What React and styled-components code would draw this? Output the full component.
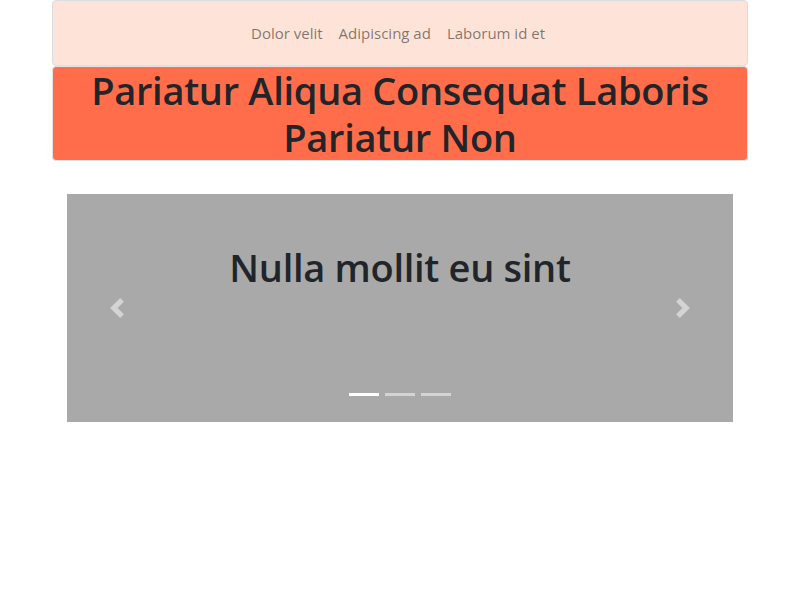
import styled, { createGlobalStyle } from "styled-components";

const GlobalStyle = createGlobalStyle`
  body {
    margin: 0;
    font-family: "Open Sans", "Noto Sans", sans-serif;
    color: #212529;
    background: #fff;
  }
`;

const App = () => {
  return (
    <>
      <GlobalStyle />
      <Page>
        <NavBar>
          <NavLink href="#">Dolor velit</NavLink>
          <NavLink href="#">Adipiscing ad</NavLink>
          <NavLink href="#">Laborum id et</NavLink>
        </NavBar>
        <Header>
          <Title>Pariatur Aliqua Consequat Laboris Pariatur Non</Title>
        </Header>
        <Carousel>
          <SlideTitle>Nulla mollit eu sint</SlideTitle>
          <Control side="left">
            <Chevron viewBox="0 0 8 8">
              <path d="M5.25 0l-4 4 4 4 1.5-1.5L4.25 4l2.5-2.5L5.25 0z" />
            </Chevron>
          </Control>
          <Control side="right">
            <Chevron viewBox="0 0 8 8">
              <path d="M2.75 0l-1.5 1.5L3.75 4l-2.5 2.5L2.75 8l4-4-4-4z" />
            </Chevron>
          </Control>
          <Indicators>
            <Dot active />
            <Dot />
            <Dot />
          </Indicators>
        </Carousel>
      </Page>
    </>
  );
};

const Page = styled.div`
  width: 696px;
  margin: 0 auto;
`;

const NavBar = styled.nav`
  height: 66px;
  display: flex;
  align-items: center;
  justify-content: center;
  gap: 16px;
  background: #fee4d8;
  border: 1px solid #dadde2;
  border-radius: 4px;
  box-sizing: border-box;
  padding-right: 4px;
`;

const NavLink = styled.a`
  font-size: 15px;
  color: rgba(0, 0, 0, 0.5);
  text-decoration: none;
`;

const Header = styled.header`
  background: #ff6d4b;
  border: 1px solid #e3e3e3;
  border-radius: 4px;
  text-align: center;
`;

const Title = styled.h1`
  margin: 0;
  font-size: 38px;
  font-weight: 600;
  line-height: 46.5px;
  letter-spacing: -0.3px;
`;

const Carousel = styled.div`
  position: relative;
  margin: 33px 15px 0;
  height: 228px;
  background: #a9a9a9;
  text-align: center;
`;

const SlideTitle = styled.h2`
  margin: 0;
  padding-top: 49px;
  font-size: 38px;
  font-weight: 600;
  line-height: 48px;
  letter-spacing: -0.3px;
`;

const Control = styled.a`
  position: absolute;
  top: 0;
  bottom: 0;
  ${(p) => (p.side === "left" ? "left: 0;" : "right: 0;")}
  width: 15%;
  display: flex;
  align-items: center;
  justify-content: center;
  opacity: 0.5;
`;

const Chevron = styled.svg`
  width: 20px;
  height: 20px;
  fill: #fff;
`;

const Indicators = styled.div`
  position: absolute;
  left: 0;
  right: 0;
  bottom: 26px;
  display: flex;
  justify-content: center;
  gap: 6px;
`;

const Dot = styled.span`
  width: 30px;
  height: 3px;
  background: #fff;
  opacity: ${(p) => (p.active ? 1 : 0.5)};
`;

export default App;
